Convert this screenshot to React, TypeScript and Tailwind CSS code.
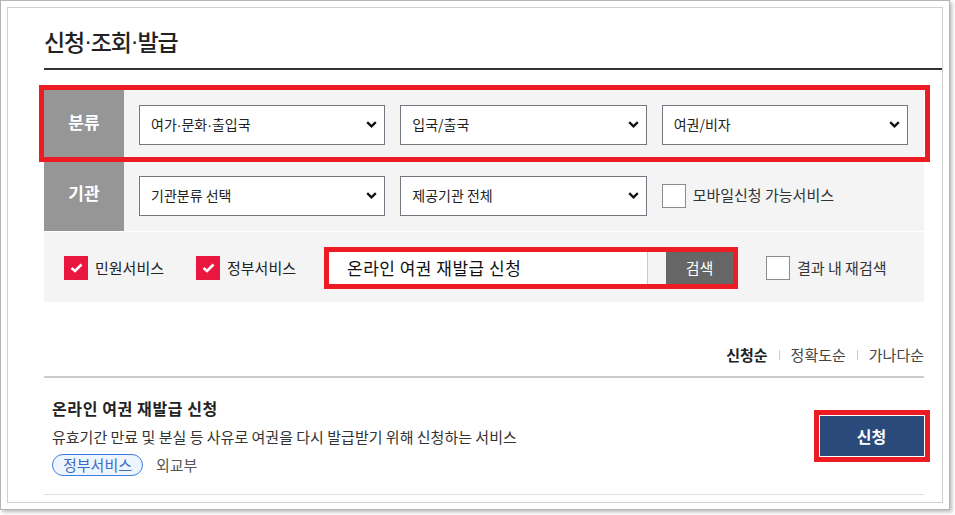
import React from "react";

function Dot() {
  return <span className="font-['Liberation_Sans',sans-serif]">·</span>;
}

function Chevron() {
  return (
    <svg width="11" height="7" viewBox="0 0 11 7" className="shrink-0">
      <polyline points="1.2,1.2 5.5,5.3 9.8,1.2" fill="none" stroke="#111" strokeWidth="2.3" />
    </svg>
  );
}

function Select({ children }: { children: React.ReactNode }) {
  return (
    <div className="h-[40px] bg-white border border-[#767680] flex items-center justify-between pl-[11px] pr-[7px]">
      <span className="text-[14px] text-[#222]">{children}</span>
      <Chevron />
    </div>
  );
}

function RedCheck() {
  return (
    <div className="w-[24px] h-[24px] bg-[#e9173f] flex items-center justify-center shrink-0">
      <svg width="13" height="10" viewBox="0 0 13 10">
        <polyline points="1.5,5 5,8 11.5,1.5" fill="none" stroke="#fff" strokeWidth="2.6" />
      </svg>
    </div>
  );
}

function EmptyCheck() {
  return <div className="w-[24px] h-[24px] bg-white border border-[#8c8c8c] shrink-0" />;
}

export default function App() {
  return (
    <div className="relative w-[955px] h-[515px] bg-white font-['Noto_Sans_CJK_KR','Noto_Sans',sans-serif] text-[#222]">
      <div className="w-[950px] h-[510px] border border-[#b4b4b4] bg-white p-[6px] shadow-[2px_2px_4px_rgba(0,0,0,0.28)]">
        <div className="h-full border border-[#d0d0d0]">
          <div className="pl-[36px]">
            <div className="h-[62px] pt-[17px] border-b-2 border-[#333]">
              <h1 className="h-[33px] flex items-center text-[23px] leading-[33px] tracking-[-1.1px] font-medium text-[#222]">
                신청<Dot />조회<Dot />발급
              </h1>
            </div>
            <div className="pr-[18px]">
              <div className="mt-[19px] bg-[#f4f4f4]">
                <div className="flex h-[71px]">
                  <div className="w-[80px] bg-[#969696] flex items-center justify-center pb-[5px]">
                    <span className="text-white font-bold text-[17px]">분류</span>
                  </div>
                  <div className="flex-1 grid grid-cols-3 gap-x-[15px] pl-[15px] pr-[16px] items-center">
                    <Select>
                      여가<Dot />문화<Dot />출입국
                    </Select>
                    <Select>입국/출국</Select>
                    <Select>여권/비자</Select>
                  </div>
                </div>
                <div className="flex h-[71px]">
                  <div className="w-[80px] bg-[#969696] flex items-center justify-center pb-[5px]">
                    <span className="text-white font-bold text-[17px]">기관</span>
                  </div>
                  <div className="flex-1 grid grid-cols-3 gap-x-[15px] pl-[15px] pr-[16px] items-center">
                    <Select>기관분류 선택</Select>
                    <Select>제공기관 전체</Select>
                    <div className="flex items-center gap-[7px]">
                      <EmptyCheck />
                      <span className="text-[15px] text-[#333]">모바일신청 가능서비스</span>
                    </div>
                  </div>
                </div>
                <div className="h-px bg-white" />
                <div className="h-[70px] flex items-start pt-[15px] pl-[20px]">
                  <div className="w-[132px] h-[42px] flex items-center gap-[7px]">
                    <RedCheck />
                    <span className="text-[15px] text-[#222]">민원서비스</span>
                  </div>
                  <div className="w-[128px] h-[42px] flex items-center gap-[7px]">
                    <RedCheck />
                    <span className="text-[15px] text-[#222]">정부서비스</span>
                  </div>
                  <div className="w-[414px] h-[42px] flex">
                    <div className="flex-1 bg-white border-r border-[#c8c8c8] flex items-center pl-[23px]">
                      <span className="text-[17px] tracking-[0.5px] text-[#111]">온라인 여권 재발급 신청</span>
                    </div>
                    <div className="w-[18px]" />
                    <div className="w-[72px] bg-[#666666] flex items-center justify-center pr-[5px]">
                      <span className="text-white text-[15px]">검색</span>
                    </div>
                  </div>
                  <div className="ml-[28px] h-[42px] flex items-center gap-[7px]">
                    <EmptyCheck />
                    <span className="text-[15px] text-[#333]">결과 내 재검색</span>
                  </div>
                </div>
              </div>

              <div className="h-[74px] flex justify-end items-end pb-[11px] text-[15px] leading-[20px]">
                <span className="font-bold text-[#222]">신청순</span>
                <span className="w-px h-[10px] bg-[#cccccc] mx-[11px] mb-[5px]" />
                <span className="text-[#444]">정확도순</span>
                <span className="w-px h-[10px] bg-[#cccccc] mx-[11px] mb-[5px]" />
                <span className="text-[#444]">가나다순</span>
              </div>
              <div className="h-[2px] bg-[#cccccc]" />

              <div className="flex items-center justify-between pt-[18px] pb-[18px] pl-[8px] border-b border-[#dddddd]">
                <div>
                  <div className="text-[16px] leading-[24px] font-bold tracking-[0.6px] text-[#222]">온라인 여권 재발급 신청</div>
                  <div className="mt-[6px] text-[15px] leading-[22px] text-[#333]">유효기간 만료 및 분실 등 사유로 여권을 다시 발급받기 위해 신청하는 서비스</div>
                  <div className="mt-[6px] flex items-center h-[22px]">
                    <span className="h-[22px] px-[10px] rounded-full border border-[#3d7fe0] bg-[#eef5ff] text-[#3a6cc8] text-[15px] leading-[20px]">정부서비스</span>
                    <span className="ml-[13px] text-[15px] text-[#555]">외교부</span>
                  </div>
                </div>
                <button className="w-[105px] h-[41px] bg-[#2a4a7b] text-white font-bold text-[16px]">신청</button>
              </div>
            </div>
          </div>
        </div>
      </div>

      <div className="absolute left-[39px] top-[85px] w-[891px] h-[77px] border-[5px] border-[#ed1c24]" />
      <div className="absolute left-[324px] top-[247px] w-[414px] h-[42px] border-[5px] border-[#ed1c24]" />
      <div className="absolute left-[814px] top-[410px] w-[116px] h-[52px] border-[5px] border-[#ed1c24] shadow-[inset_0_0_0_1px_#ffffff]" />
    </div>
  );
}
